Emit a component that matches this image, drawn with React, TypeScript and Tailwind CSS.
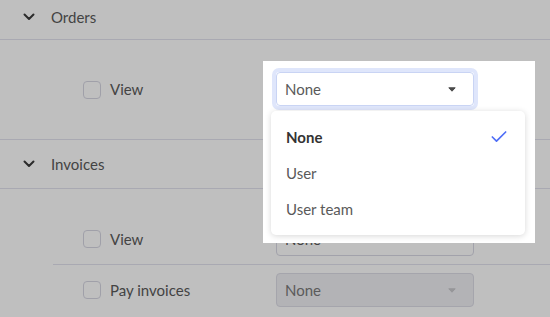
import { Check } from 'lucide-react'

const font = { fontFamily: 'Lato, "Noto Sans", sans-serif' }

function Chevron() {
  return (
    <svg width="12" height="8" viewBox="0 0 12 8" className="shrink-0">
      <path d="M1.5 1.5 L6 6 L10.5 1.5" fill="none" stroke="#3a3a3a" strokeWidth="2" strokeLinecap="round" strokeLinejoin="round" />
    </svg>
  )
}

function Caret({ color = '#4a4a4a' }: { color?: string }) {
  return (
    <svg width="8" height="5" viewBox="0 0 8 5">
      <path d="M0.8 0.8 L7.2 0.8 L4 4.2 Z" fill={color} strokeLinejoin="round" stroke={color} strokeWidth="1" />
    </svg>
  )
}

function Checkbox() {
  return <div className="h-[18px] w-[18px] shrink-0 rounded-[4px] border border-[#d6d6e2] bg-white" />
}

function Select({ disabled = false }: { disabled?: boolean }) {
  return (
    <div
      className={`flex h-[34px] w-[198px] items-center justify-between rounded-[4px] border pl-[8px] pr-[17px] text-[15px] ${
        disabled ? 'border-[#dcdce6] bg-[#efeff3] text-[#7a7a7a]' : 'border-[#d8d8e4] bg-white text-[#5a5a5a]'
      }`}
    >
      <span>None</span>
      <Caret color={disabled ? '#c8c8cc' : '#4a4a4a'} />
    </div>
  )
}

function SectionHeader({ label, className }: { label: string; className: string }) {
  return (
    <div className={`flex border-b border-[#e2e2ee] pl-[23px] ${className}`}>
      <Chevron />
      <span className="ml-[16px] text-[15px] leading-[20px] text-[#5a5a5a]">{label}</span>
    </div>
  )
}

function PermissionRow({ label, disabled, className }: { label: string; disabled?: boolean; className: string }) {
  return (
    <div className={`flex items-center ${className}`}>
      <div className="flex w-[193px] items-center gap-[9px]">
        <Checkbox />
        <span className="text-[15px] text-[#5a5a5a]">{label}</span>
      </div>
      <Select disabled={disabled} />
    </div>
  )
}

export default function App() {
  const options = ['None', 'User', 'User team']

  return (
    <div className="relative h-[317px] w-[550px] overflow-hidden bg-white" style={font}>
      {/* page content */}
      <SectionHeader label="Orders" className="h-[40px] items-center pb-[6px]" />
      <PermissionRow label="View" className="h-[100px] border-b border-[#e2e2ee] pl-[83px]" />
      <SectionHeader label="Invoices" className="h-[49px] items-center" />
      <div className="pt-[25px]">
        <div className="ml-[53px] border-b border-[#e2e2ee] py-[8px] pl-[30px]">
          <PermissionRow label="View" className="" />
        </div>
        <div className="ml-[53px] pl-[30px] pt-[8px]">
          <PermissionRow label="Pay invoices" disabled className="" />
        </div>
      </div>

      {/* spotlight overlay */}
      <div className="absolute left-[263px] top-[61px] h-[182px] w-[272px] bg-white shadow-[0_0_0_2000px_rgba(0,0,0,0.25)]">
        <div className="absolute left-[9px] top-[7px] rounded-[7px] border-[4px] border-[#dfe6fb]">
          <div className="flex h-[34px] w-[198px] items-center justify-between rounded-[4px] border border-[#c9d4f4] bg-white pl-[8px] pr-[17px] text-[15px] text-[#5a5a5a]">
            <span>None</span>
            <Caret />
          </div>
        </div>
        <div className="absolute left-[8px] top-[50px] w-[254px] rounded-[5px] bg-white py-[8px] shadow-[0_1px_6px_rgba(0,0,0,0.16)]">
          {options.map((o, i) => (
            <div key={o} className="flex h-[36px] items-center justify-between pl-[15px] pr-[16px] text-[15px]">
              <span className={i === 0 ? 'font-bold text-[#333333]' : 'text-[#5a5a5a]'}>{o}</span>
              {i === 0 && <Check className="h-[20px] w-[20px] text-[#4f6ef7]" strokeWidth={2} />}
            </div>
          ))}
        </div>
      </div>
    </div>
  )
}
